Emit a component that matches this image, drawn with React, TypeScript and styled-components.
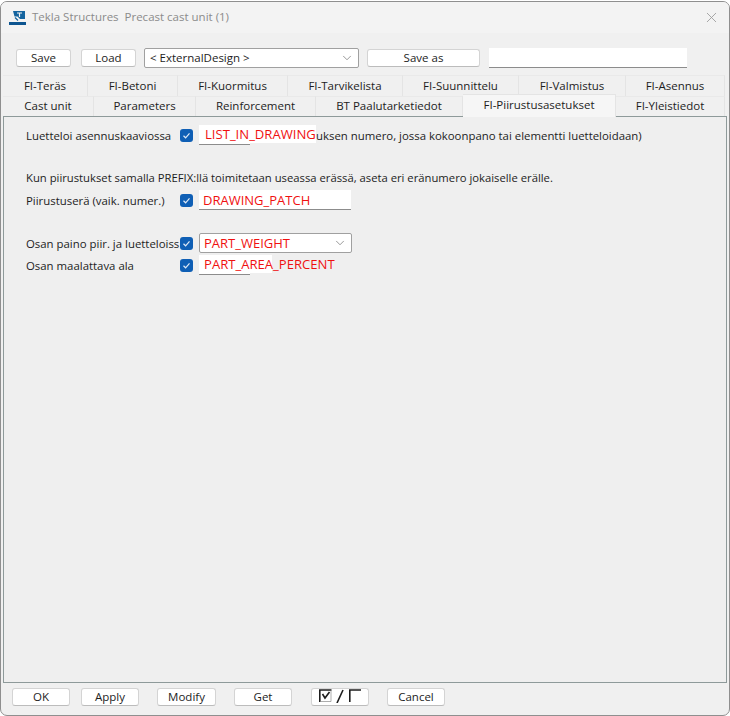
import React from 'react'
import styled, { createGlobalStyle } from 'styled-components'
import { ChevronDown, X } from 'lucide-react'

const Global = createGlobalStyle`
  html, body { margin: 0; padding: 0; background: #fff; }
  body { font-family: "Open Sans", "Noto Sans", sans-serif; font-size: 11.5px; color: #1d1d1d; }
`

const Window = styled.div`
  box-sizing: border-box;
  width: 730px;
  height: 715px;
  margin-top: 1px;
  display: flex;
  flex-direction: column;
  background: #f0f0f0;
  border: 1px solid #8f8f8f;
  border-radius: 7px;
  overflow: hidden;
`

const TitleBar = styled.div`
  height: 31px;
  flex: none;
  display: flex;
  align-items: center;
  padding: 0 9px 0 8px;
  background: #f3f3f3;
  color: #8b8b8b;
  font-size: 11.5px;
`

const TitleText = styled.span`
  margin: 0 0 3px 5px;
  white-space: pre;
`

const CloseIcon = styled(X)`
  margin-left: auto;
  color: #9a9a9a;
`

const Toolbar = styled.div`
  height: 20px;
  flex: none;
  margin: 15px 0 7px 15px;
  display: flex;
  align-items: center;
`

const Btn = styled.button<{ $w: number; $ml?: number }>`
  box-sizing: border-box;
  width: ${p => p.$w}px;
  height: 18px;
  margin-left: ${p => p.$ml ?? 0}px;
  padding: 0 0 1px;
  display: flex;
  align-items: center;
  justify-content: center;
  background: #fff;
  border: 1px solid #d4d4d4;
  border-bottom-color: #bcbcbc;
  border-radius: 3px;
  font: inherit;
  color: #1d1d1d;
`

const Combo = styled.div<{ $w: number; $ml?: number; $red?: boolean }>`
  box-sizing: border-box;
  width: ${p => p.$w}px;
  height: 20px;
  margin-left: ${p => p.$ml ?? 0}px;
  display: flex;
  align-items: center;
  padding: 0 4px 1px ${p => (p.$red ? 4 : 5)}px;
  background: #fff;
  border: 1px solid #a0a0a0;
  border-radius: 2px;
  color: ${p => (p.$red ? '#f01010' : '#1d1d1d')};
  font-size: ${p => (p.$red ? '13px' : 'inherit')};
  white-space: nowrap;
`

const ComboChevron = styled(ChevronDown)`
  margin-left: auto;
  color: #6e6e6e;
`

const TextBox = styled.div<{ $w: number; $ml?: number }>`
  box-sizing: border-box;
  width: ${p => p.$w}px;
  height: 20px;
  margin-left: ${p => p.$ml ?? 0}px;
  padding: 0 4px;
  display: flex;
  align-items: center;
  background: #fff;
  border-bottom: 1px solid #8c8c8c;
  color: #f01010;
  font-size: 13px;
  white-space: nowrap;
`

/* short field with underline, a white label lies over it and runs past its end */
const ShortField = styled.div`
  position: relative;
  box-sizing: border-box;
  width: 51px;
  height: 20px;
  flex: none;
  background: #fff;
  border-bottom: 1px solid #8c8c8c;
`

const FieldLabel = styled.span<{ $w: number; $pl: number }>`
  position: absolute;
  left: 0;
  top: 0;
  box-sizing: border-box;
  width: ${p => p.$w}px;
  height: 18px;
  padding-left: ${p => p.$pl}px;
  display: flex;
  align-items: center;
  background: #fff;
  color: #f01010;
  font-size: 13.1px;
  white-space: nowrap;
`

const TabRow = styled.div<{ $h: number }>`
  flex: none;
  height: ${p => p.$h}px;
  display: flex;
  margin-left: 2px;
`

const Tab = styled.div<{ $w: number; $active?: boolean }>`
  box-sizing: border-box;
  width: ${p => p.$w}px;
  padding-bottom: 2px;
  display: flex;
  align-items: center;
  justify-content: center;
  border-right: 1px solid #e4e4e4;
  border-top: 1px solid #e9e9e9;
  white-space: nowrap;
  ${p => p.$active && `
    background: #f6f6f6;
    height: 23px;
    margin-top: -2px;
    padding-bottom: 3px;
    position: relative;
    z-index: 1;
    border-color: #e4e4e4;
  `}
`

const Panel = styled.div`
  box-sizing: border-box;
  flex: none;
  height: 567px;
  margin: 0 2px;
  padding: 7px 0 0 22px;
  border: 1px solid #8e9a9a;
  background: #efefef;
  font-size: 11.28px;
`

const Row = styled.div<{ $mt?: number }>`
  height: 22px;
  display: flex;
  align-items: center;
  margin-top: ${p => p.$mt ?? 0}px;
  white-space: nowrap;
`

const Label = styled.span`
  width: 154px;
  flex: none;
  font-size: 11.4px;
`

const Check = styled.span`
  width: 13px;
  height: 13px;
  flex: none;
  display: flex;
  align-items: center;
  justify-content: center;
  margin-right: 6px;
  background: #0f5fb5;
  border-radius: 3px;
`

const Note = styled(Row)`
  height: 16px;
`

const Trailing = styled.span`
  margin-left: 66px;
  font-size: 11.4px;
`

const Footer = styled.div`
  flex: 1;
  display: flex;
  align-items: center;
  padding: 0 0 5px 11px;
`

const Tick = () => (
  <Check>
    <svg width="9" height="9" viewBox="0 0 9 9" fill="none" stroke="#dfe9f5" strokeWidth="1.2">
      <path d="M1.5 4.8 L3.6 6.8 L7.5 2.4" />
    </svg>
  </Check>
)

const Logo = () => (
  <svg width="18" height="14" viewBox="0 0 18 14">
    <path d="M4 0 H16 V8 H11 L8.5 5.5 H5.5 Z" fill="#14649f" />
    <path d="M8 2 H13 M10.5 2 V6" stroke="#f3f3f3" strokeWidth="1.2" fill="none" />
    <path d="M6 6.5 L9 9.5" stroke="#14649f" strokeWidth="1.2" />
    <path d="M0 11 H17 V14 H0 Z" fill="#0d5590" />
  </svg>
)

const CheckGlyphs = () => (
  <svg width="42" height="14" viewBox="0 0 42 14" fill="none">
    <path d="M0.8 13 V1 H12.5" stroke="#1d1d1d" strokeWidth="1.6" />
    <path d="M1 12.5 H12 V1.5" stroke="#8a8a8a" strokeWidth="0.7" />
    <path d="M3.5 5 L6 9 L10.5 3" stroke="#1d1d1d" strokeWidth="1.6" />
    <path d="M18 14 L24 1" stroke="#1d1d1d" strokeWidth="1.6" />
    <path d="M30.8 13 V1 H42" stroke="#1d1d1d" strokeWidth="1.6" />
  </svg>
)

const row1 = [
  ['FI-Teräs', 85], ['FI-Betoni', 90], ['FI-Kuormitus', 110], ['FI-Tarvikelista', 115],
  ['FI-Suunnittelu', 116], ['FI-Valmistus', 107], ['FI-Asennus', 99],
] as const

const row2 = [
  ['Cast unit', 91], ['Parameters', 102], ['Reinforcement', 120], ['BT Paalutarketiedot', 147],
  ['FI-Piirustusasetukset', 153], ['FI-Yleistiedot', 109],
] as const

export default function App() {
  return (
    <>
      <Global />
      <Window>
        <TitleBar>
          <Logo />
          <TitleText>Tekla Structures  Precast cast unit (1)</TitleText>
          <CloseIcon size={17} strokeWidth={1.2} />
        </TitleBar>
        <Toolbar>
          <Btn $w={55}>Save</Btn>
          <Btn $w={55} $ml={10}>Load</Btn>
          <Combo $w={215} $ml={8}>
            &lt; ExternalDesign &gt;
            <ComboChevron size={14} strokeWidth={1.2} />
          </Combo>
          <Btn $w={113} $ml={8}>Save as</Btn>
          <TextBox $w={198} $ml={9} />
        </Toolbar>
        <TabRow $h={21}>
          {row1.map(([t, w]) => <Tab key={t} $w={w}>{t}</Tab>)}
        </TabRow>
        <TabRow $h={20}>
          {row2.map(([t, w]) => (
            <Tab key={t} $w={w} $active={t === 'FI-Piirustusasetukset'}>{t}</Tab>
          ))}
        </TabRow>
        <Panel>
          <Row>
            <Label>Luetteloi asennuskaaviossa</Label>
            <Tick />
            <ShortField><FieldLabel $w={117} $pl={6}>LIST_IN_DRAWING</FieldLabel></ShortField>
            <Trailing>uksen numero, jossa kokoonpano tai elementti luetteloidaan)</Trailing>
          </Row>
          <Note $mt={23}>Kun piirustukset samalla PREFIX:llä toimitetaan useassa erässä, aseta eri eränumero jokaiselle erälle.</Note>
          <Row $mt={4}>
            <Label>Piirustuserä (vaik. numer.)</Label>
            <Tick />
            <TextBox $w={152}>DRAWING_PATCH</TextBox>
          </Row>
          <Row $mt={21}>
            <Label>Osan paino piir. ja luetteloiss</Label>
            <Tick />
            <Combo $w={153} $red>
              PART_WEIGHT
              <ComboChevron size={14} strokeWidth={1.2} />
            </Combo>
          </Row>
          <Row>
            <Label>Osan maalattava ala</Label>
            <Tick />
            <ShortField><FieldLabel $w={73} $pl={5}>PART_AREA_PERCENT</FieldLabel></ShortField>
          </Row>
        </Panel>
        <Footer>
          <Btn $w={58}>OK</Btn>
          <Btn $w={58} $ml={11}>Apply</Btn>
          <Btn $w={59} $ml={18}>Modify</Btn>
          <Btn $w={58} $ml={18}>Get</Btn>
          <Btn $w={58} $ml={19}><CheckGlyphs /></Btn>
          <Btn $w={58} $ml={18}>Cancel</Btn>
        </Footer>
      </Window>
    </>
  )
}
